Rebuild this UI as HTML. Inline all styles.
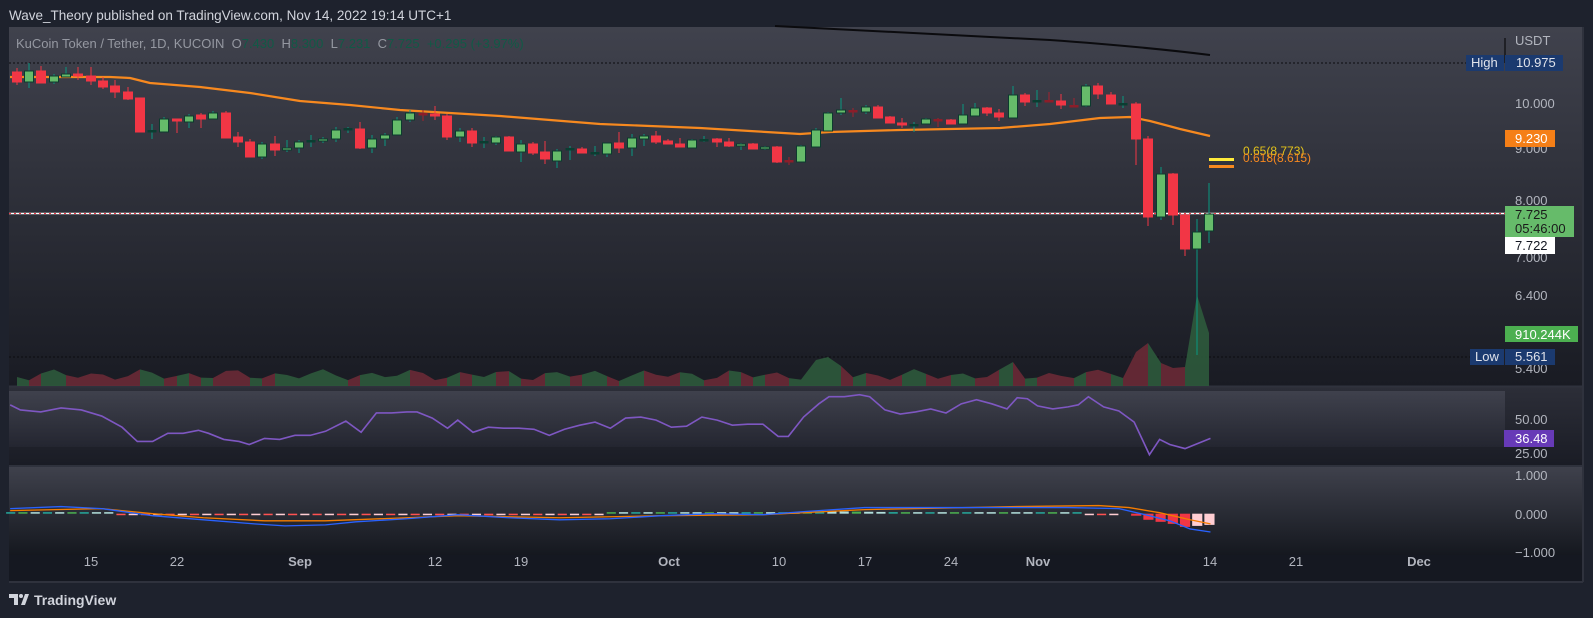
<!DOCTYPE html>
<html><head><meta charset="utf-8">
<style>
html,body{margin:0;padding:0;background:#1e222d;width:1593px;height:618px;overflow:hidden;font-family:"Liberation Sans",sans-serif}
svg{position:absolute;left:0;top:0}
text{font-family:"Liberation Sans",sans-serif;white-space:pre}
</style></head><body>
<svg id="s" width="1593" height="618" viewBox="0 0 1593 618" xmlns="http://www.w3.org/2000/svg">
<defs>
<linearGradient id="gm" x1="0" y1="0" x2="0" y2="1"><stop offset="0" stop-color="#40424d"/><stop offset="1" stop-color="#191b23"/></linearGradient>
<linearGradient id="gr" x1="0" y1="0" x2="0" y2="1"><stop offset="0" stop-color="#2c2e38"/><stop offset="1" stop-color="#1a1c25"/></linearGradient>
<linearGradient id="gb" x1="0" y1="0" x2="0" y2="1"><stop offset="0" stop-color="#464854"/><stop offset="1" stop-color="#262833"/></linearGradient>
<linearGradient id="gc" x1="0" y1="0" x2="0" y2="1"><stop offset="0" stop-color="#3f414c"/><stop offset="1" stop-color="#15181f"/></linearGradient>
</defs>
<rect x="0" y="0" width="1593" height="618" fill="#1e222d"/>
<text x="9" y="20" font-size="13.5" fill="#d1d4dc">Wave_Theory published on TradingView.com, Nov 14, 2022 19:14 UTC+1</text>
<rect x="9" y="27" width="1574" height="555" fill="#2a2e39"/>
<rect x="9" y="27" width="1574" height="359" fill="url(#gm)"/>
<rect x="9" y="387" width="1574" height="78" fill="url(#gr)"/>
<rect x="9" y="391" width="1496" height="56" fill="url(#gb)" opacity="0.75"/>
<rect x="9" y="467" width="1574" height="88" fill="url(#gc)"/>
<rect x="9" y="555" width="1574" height="27" fill="#151821"/>
<line x1="9" y1="386.5" x2="1583" y2="386.5" stroke="#2f323d" stroke-width="2"/>
<line x1="9" y1="466" x2="1583" y2="466" stroke="#2f323d" stroke-width="2"/>
<line x1="1583" y1="27" x2="1583" y2="582" stroke="#2f323d" stroke-width="2"/>
<line x1="9" y1="582" x2="1583" y2="582" stroke="#2f323d" stroke-width="2"/>
<line x1="9" y1="63" x2="1466" y2="63" stroke="#0b0c10" stroke-width="1" stroke-dasharray="2,2"/>
<line x1="9" y1="357" x2="1470" y2="357" stroke="#0b0c10" stroke-width="1" stroke-dasharray="2,2"/>
<g id="vol"></g>
<path d="M775,26 C850,30 950,35 1050,40 C1120,45 1170,50 1210,55" fill="none" stroke="#0b0b0e" stroke-width="2"/>
<path d="M10,77 L110,77 L130,78 L150,83 L200,87 L250,93 L300,101 L350,105 L400,110 L450,113 L500,116 L550,120 L600,124 L650,126 L700,128 L750,131 L800,134 L830,132 L900,130 L1000,128 L1050,124 L1100,118 L1130,117 L1150,121 L1180,129 L1210,136" fill="none" stroke="#f7891f" stroke-width="2.2" stroke-linejoin="round"/>
<line x1="9" y1="213.5" x2="1505" y2="213.5" stroke="#ffffff" stroke-width="1.5"/>
<line x1="9" y1="213.5" x2="1505" y2="213.5" stroke="#f23645" stroke-width="1" stroke-dasharray="2,3"/>
<g id="cd"></g>
<line x1="1209" y1="159.5" x2="1234" y2="159.5" stroke="#ffeb3b" stroke-width="3"/>
<line x1="1209" y1="166.5" x2="1234" y2="166.5" stroke="#f7891f" stroke-width="3"/>
<text x="1243" y="155" font-size="12" fill="#e6c41a">0.65(8.773)</text>
<text x="1243" y="162" font-size="12" fill="#f7891f">0.618(8.615)</text>
<text x="16" y="48" font-size="13" fill="#9598a1" xml:space="preserve">KuCoin Token / Tether, 1D, KUCOIN  O<tspan fill="#115a46">7.430</tspan>  H<tspan fill="#115a46">8.300</tspan>  L<tspan fill="#115a46">7.231</tspan>  C<tspan fill="#115a46">7.725</tspan>  <tspan fill="#115a46">+0.295 (+3.97%)</tspan></text>
<line x1="1505" y1="38" x2="1505" y2="63" stroke="#000" stroke-width="1"/>
<g font-size="13" fill="#b2b5be">
<text x="1515" y="45">USDT</text>
<text x="1515" y="108">10.000</text>
<text x="1515" y="153">9.000</text>
<text x="1515" y="205">8.000</text>
<text x="1515" y="262">7.000</text>
<text x="1515" y="300">6.400</text>
<text x="1515" y="373">5.400</text>
<text x="1515" y="424">50.00</text>
<text x="1515" y="458">25.00</text>
<text x="1515" y="480">1.000</text>
<text x="1515" y="519">0.000</text>
<text x="1515" y="557">−1.000</text>
</g>
<rect x="1466" y="55" width="38" height="16" fill="#1b3a6f"/><text x="1471" y="67" font-size="13" fill="#e0e3eb">High</text>
<rect x="1505" y="55" width="58" height="16" fill="#1b3a6f"/><text x="1516" y="67" font-size="13" fill="#e0e3eb">10.975</text>
<rect x="1505" y="130" width="50" height="17" fill="#f57f17"/><text x="1515" y="143" font-size="13" fill="#fff">9.230</text>
<rect x="1505" y="206" width="69" height="31" fill="#66bb6a"/><text x="1515" y="219" font-size="13" fill="#1a1a1a">7.725</text><text x="1515" y="233" font-size="13" fill="#1a1a1a">05:46:00</text>
<rect x="1505" y="237" width="50" height="17" fill="#ffffff"/><text x="1515" y="250" font-size="13" fill="#131722">7.722</text>
<rect x="1505" y="326" width="73" height="16" fill="#4caf50"/><text x="1515" y="339" font-size="13" fill="#fff">910.244K</text>
<rect x="1470" y="349" width="34" height="16" fill="#1b3a6f"/><text x="1475" y="361" font-size="13" fill="#e0e3eb">Low</text>
<rect x="1505" y="349" width="50" height="16" fill="#1b3a6f"/><text x="1515" y="361" font-size="13" fill="#e0e3eb">5.561</text>
<rect x="1504" y="430" width="50" height="17" fill="#673ab7"/><text x="1515" y="443" font-size="13" fill="#fff">36.48</text>
<g transform="scale(1.0172)">
<polyline fill="none" stroke="#7e57c2" stroke-width="1.6" points="10,398 20,403 40,405 60,401 80,403 100,409 120,420 135,434 150,434 165,426 180,426 195,423 205,426 220,432 235,434 245,437 260,431 275,432 290,428 305,428 320,424 340,414 355,425 370,406 385,406 400,405 410,405 425,411 440,421 450,413 465,425 480,420 495,421 510,421 525,422 540,428 555,422 570,418 585,415 600,421 615,411 630,410 645,413 660,420 675,419 690,410 705,413 720,418 735,417 750,417 765,429 775,429 790,410 805,397 815,390 830,390 845,388 855,390 870,403 885,407 900,405 915,402 930,406 945,397 960,393 975,397 990,402 1000,391 1010,392 1020,399 1035,402 1050,400 1060,398 1070,390 1085,400 1100,404 1115,415 1130,447 1140,432 1150,437 1165,441 1190,431"/>
<g id="hist"></g>
<polyline fill="none" stroke="#f57c00" stroke-width="1.3" points="10,502 100,500 150,505 200,509 260,512 320,512 400,509 450,507 550,509 650,507 750,506 850,501 1000,498 1080,497 1110,499 1140,504 1170,511 1190,515"/>
<polyline fill="none" stroke="#2962ff" stroke-width="1.3" points="10,500 60,498 100,500 150,507 200,511 250,515 280,517 320,516 350,513 400,510 450,506 500,509 550,511 600,510 650,507 700,505 750,506 790,503 850,499 900,499 1000,499 1050,499 1100,500 1130,507 1150,512 1170,520 1190,523"/>
</g>
<g font-size="13" fill="#b2b5be" text-anchor="middle">
<text x="91" y="566">15</text><text x="177" y="566">22</text><text x="300" y="566" font-weight="bold">Sep</text>
<text x="435" y="566">12</text><text x="521" y="566">19</text><text x="669" y="566" font-weight="bold">Oct</text>
<text x="779" y="566">10</text><text x="865" y="566">17</text><text x="951" y="566">24</text>
<text x="1038" y="566" font-weight="bold">Nov</text><text x="1210" y="566">14</text><text x="1296" y="566">21</text><text x="1419" y="566" font-weight="bold">Dec</text>
</g>
<g transform="translate(9,594)">
<path d="M0,0 H9 V11 H5 V4 H0 Z" fill="#d1d4dc"/>
<circle cx="12" cy="2" r="2" fill="#d1d4dc"/>
<path d="M12,11 L16,0 H20 L16,11 Z" fill="#d1d4dc"/>
</g>
<text x="34" y="605" font-size="14" fill="#d1d4dc" font-weight="bold">TradingView</text>
</svg>
<script>
var C=[[17,72,82,68,85,'r'],[29,71,82,63,88,'g'],[41,71,83,66,83,'r'],[54,76,82,74,84,'g'],[66,74,77,67,77,'g'],[78,74,76,67,80,'r'],[91,76,81,67,85,'r'],[103,81,87,77,89,'r'],[115,86,92,80,98,'r'],[128,92,99,87,100,'r'],[140,98,132,98,132,'r'],[152,131,132,124,139,'d'],[164,119,132,117,132,'g'],[177,119,121,119,133,'r'],[189,116,122,114,128,'g'],[201,115,119,113,128,'r'],[213,113,119,111,119,'g'],[226,113,138,111,138,'r'],[238,137,142,132,147,'r'],[250,142,157,139,157,'r'],[262,144,157,142,159,'g'],[275,144,150,136,156,'r'],[287,148,150,140,152,'g'],[299,142,148,140,153,'g'],[311,141,142,135,147,'d'],[323,139,141,137,143,'g'],[336,130,139,127,142,'g'],[348,129,130,127,133,'d'],[360,129,148,122,149,'r'],[372,139,148,135,153,'g'],[385,135,139,133,146,'g'],[397,120,135,117,135,'g'],[410,113,120,110,122,'g'],[423,114,114,110,121,'dr'],[435,114,116,106,120,'r'],[447,116,137,114,140,'r'],[460,131,137,128,142,'g'],[472,131,143,128,147,'r'],[484,142,143,137,148,'d'],[496,137,143,136,145,'g'],[509,137,151,136,151,'r'],[521,144,152,140,162,'g'],[533,144,153,142,155,'r'],[545,152,159,141,164,'r'],[557,151,161,149,168,'g'],[570,149,150,146,160,'d'],[582,149,153,147,153,'r'],[595,153,153,146,156,'d'],[607,143,154,143,157,'g'],[619,143,148,132,153,'r'],[632,138,148,134,156,'g'],[644,136,139,134,146,'g'],[656,136,142,131,144,'r'],[668,141,144,139,144,'r'],[680,144,147,138,147,'r'],[692,140,148,139,148,'g'],[704,140,140,136,142,'d'],[717,139,142,138,147,'r'],[729,142,146,138,147,'r'],[741,144,146,143,150,'g'],[753,144,149,143,149,'r'],[765,147,149,146,150,'g'],[777,147,162,146,163,'r'],[789,161,161,157,165,'dr'],[801,146,162,145,162,'g'],[816,130,147,128,147,'g'],[828,113,131,112,131,'g'],[841,110,113,98,115,'g'],[853,111,111,108,117,'dr'],[866,107,112,105,114,'g'],[878,107,118,105,118,'r'],[890,117,123,116,123,'r'],[902,123,125,118,128,'r'],[914,125,125,122,132,'d'],[926,119,124,118,124,'g'],[938,120,120,118,127,'dr'],[951,120,124,119,124,'r'],[963,115,124,104,124,'g'],[975,108,116,103,116,'g'],[987,108,113,107,116,'r'],[999,113,117,109,121,'r'],[1013,95,118,86,118,'g'],[1025,95,102,93,106,'r'],[1037,101,101,90,107,'d'],[1049,101,101,92,101,'dr'],[1061,101,105,94,109,'r'],[1074,106,106,98,107,'dr'],[1086,86,106,84,107,'g'],[1098,86,94,83,99,'r'],[1111,95,104,92,104,'r'],[1123,104,104,96,108,'d'],[1136,104,139,102,165,'r'],[1148,139,217,136,226,'r'],[1161,174,217,167,220,'g'],[1173,174,215,173,225,'r'],[1185,215,249,214,256,'r'],[1197,232,249,219,355,'g'],[1209,214,231,183,243,'g']];
var cd=document.getElementById('cd'),h='';
C.forEach(function(c){var x=c[0],t=Math.min(c[1],c[2]),b=Math.max(c[1],c[2]),k=c[5];
var wc=(k=='g'||k=='d')?'#089981':'#f23645';
if(k=='dr')wc='#a3222f';
h+='<line x1="'+x+'" y1="'+c[3]+'" x2="'+x+'" y2="'+c[4]+'" stroke="'+wc+'" stroke-width="1"/>';
if(k=='d'||k=='dr'){h+='<rect x="'+(x-4.5)+'" y="'+(t-1)+'" width="9" height="2.5" fill="'+(k=='d'?'#0b3d31':'#8c1d29')+'"/>';}
else{if(b-t<2)b=t+2;h+='<rect x="'+(x-4.5)+'" y="'+t+'" width="9" height="'+(b-t)+'" fill="'+(k=='g'?'#66bb6a':'#f23645')+'" stroke="'+(k=='g'?'#0c3b2e':'#f23645')+'" stroke-width="1"/>';}
});
cd.innerHTML=h;
var vy={816:360,828:357,841:366,1013:362,1136:352,1148:343,1161:363,1173:368,1185:367,1197:295,1209:333,1123:378,1111:374};
var v='',prev=null;
C.forEach(function(c,i){var x=c[0];var y=vy[x]||(375+4*Math.sin(i*1.7)+2*Math.cos(i*0.9));
if(prev){var col=(c[5]=='g'||c[5]=='d')?'#2e5a3c':'#6a2a36';
v+='<polygon points="'+prev[0]+',386 '+prev[0]+','+prev[1]+' '+x+','+y+' '+x+',386" fill="'+col+'" opacity="0.9"/>';}
prev=[x,y];});
document.getElementById('vol').innerHTML=v;
var hh='';
for(var i=0;i<97;i++){var x=10+i*12.05;var v2,col;
if(x<1105){v2=Math.sin(i*0.13)*1.2+(i>65&&i<88?1.5:0)+(i>8&&i<25?-1.2:0);
col=v2>=0?(i%3==0?'#26a69a':'#b2dfdb'):(i%2?'#ff5252':'#ffcdd2');
if(i%4==1&&v2>=0)col='#4caf50';
var hgt=Math.max(1.5,Math.abs(v2));hh+='<rect x="'+(x-4)+'" y="'+(v2>=0?505-hgt:505)+'" width="9" height="'+hgt+'" fill="'+col+'"/>';}
}
var tail=[[1117,2,'#f23645'],[1129,6,'#f23645'],[1141,8,'#f23645'],[1153,10,'#f23645'],[1165,13,'#f23645'],[1177,12,'#ffcdd2'],[1189,11,'#ffcdd2']];
tail.forEach(function(t){hh+='<rect x="'+(t[0]-5)+'" y="505" width="10" height="'+t[1]+'" fill="'+t[2]+'"/>';});
document.getElementById('hist').innerHTML=hh;
</script>
</body></html>
